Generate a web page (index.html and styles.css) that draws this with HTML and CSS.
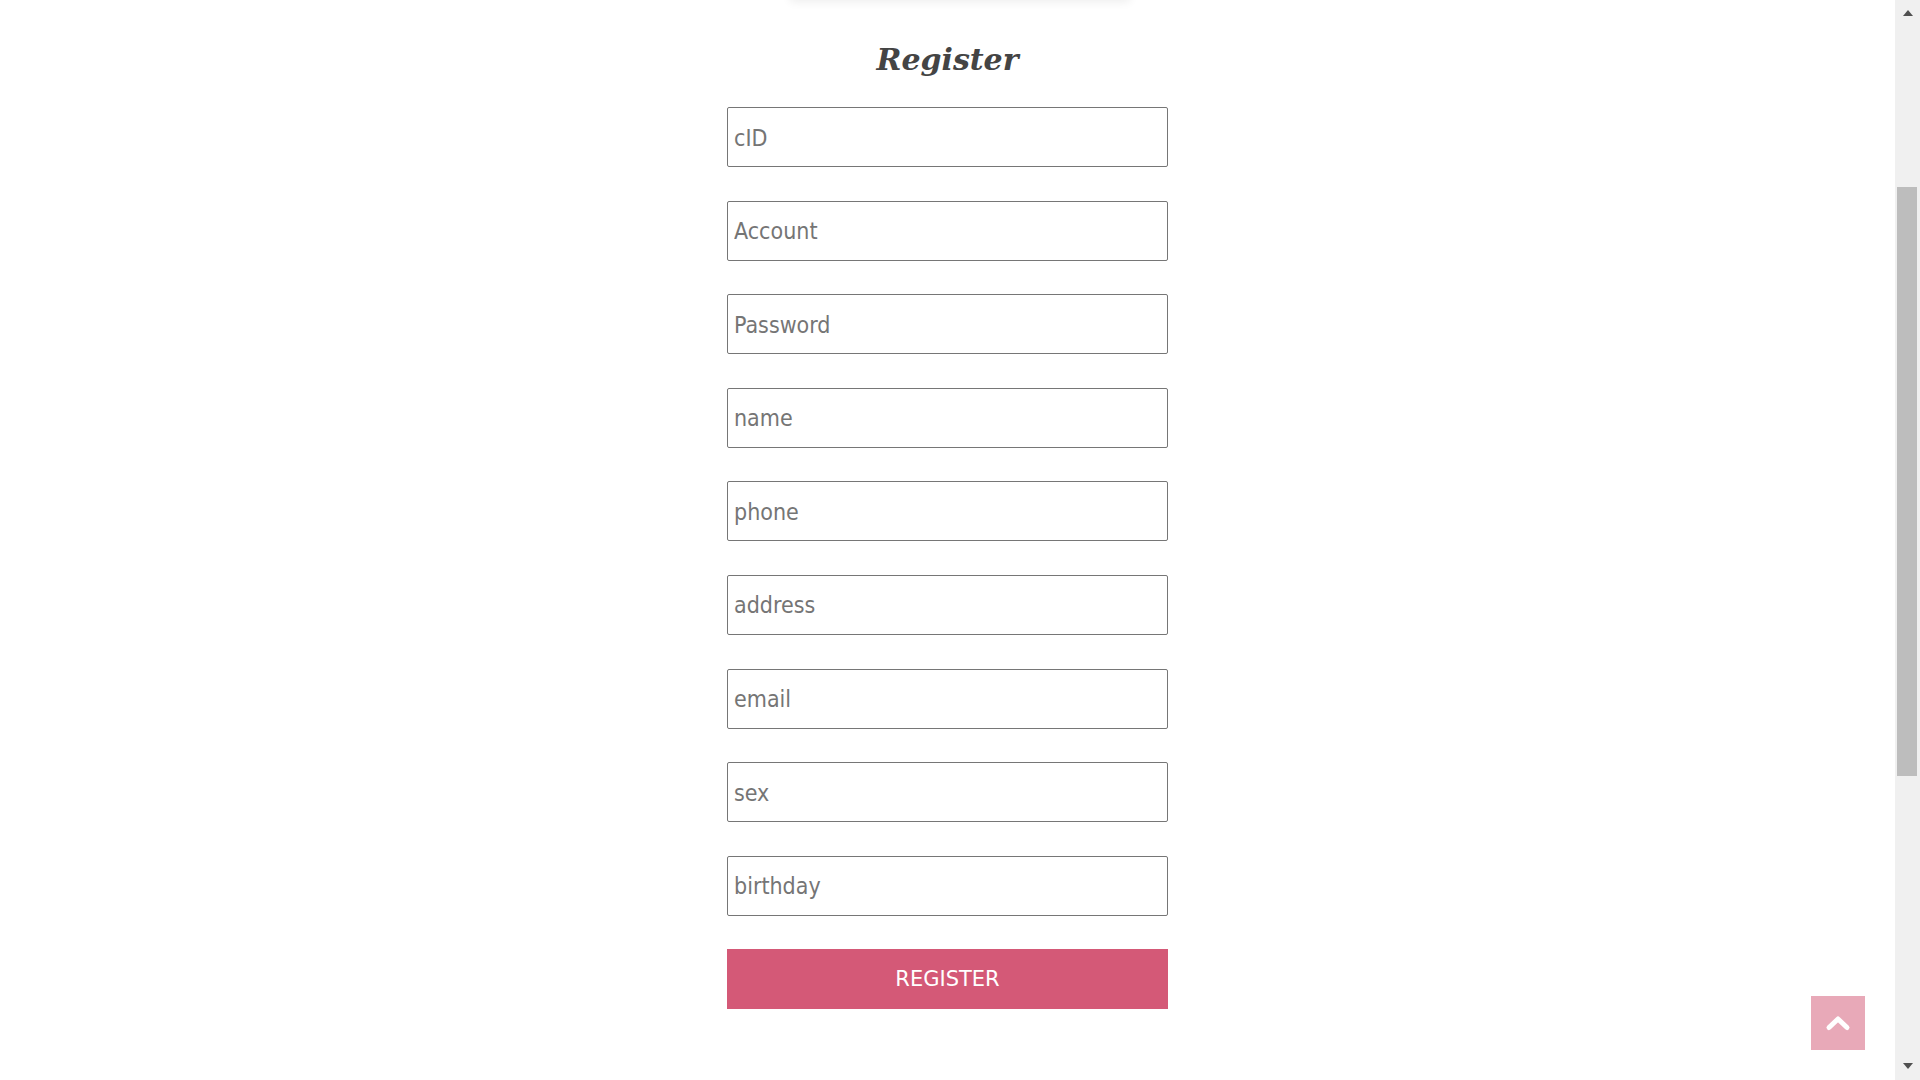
FILE: index.html
```html
<!DOCTYPE html>
<html lang="en">
<head>
<meta charset="utf-8">
<title>Register</title>
<link rel="stylesheet" href="styles.css">
</head>
<body>
<div class="viewport">
  <main class="page">
    <div class="top-card"></div>
    <h1 class="title">Register</h1>
    <form class="register-form">
      <input class="field" type="text" placeholder="cID">
      <input class="field" type="text" placeholder="Account">
      <input class="field" type="password" placeholder="Password">
      <input class="field" type="text" placeholder="name">
      <input class="field" type="text" placeholder="phone">
      <input class="field" type="text" placeholder="address">
      <input class="field" type="text" placeholder="email">
      <input class="field" type="text" placeholder="sex">
      <input class="field" type="text" placeholder="birthday">
      <button class="submit" type="button">REGISTER</button>
    </form>
  </main>
  <aside class="scrollbar">
    <div class="sb-btn"><span class="tri-up"></span></div>
    <div class="sb-track"><div class="sb-thumb"></div></div>
    <div class="sb-btn sb-btn-down"><span class="tri-down"></span></div>
  </aside>
</div>
<a class="to-top" href="#">
  <svg width="26" height="18" viewBox="0 0 26 18"><polyline points="4,13.5 13,5 22,13.5" fill="none" stroke="#fff" stroke-width="5" stroke-linecap="round" stroke-linejoin="round"/></svg>
</a>
</body>
</html>
```
FILE: styles.css
```css
html, body {
  margin: 0;
  padding: 0;
  height: 100%;
  background: #fff;
}
body {
  overflow: hidden;
}
.viewport {
  display: flex;
  height: 100vh;
}
.page {
  flex: 1;
  display: flex;
  flex-direction: column;
  align-items: center;
  padding-top: 42px;
  overflow: hidden;
}
.top-card {
  width: 340px;
  height: 20px;
  margin: -62px 0 42px 25px;
  background: #fff;
  box-shadow: 0 2px 10px rgba(0, 0, 0, 0.07);
}
.title {
  margin: 0 0 29px;
  font-family: "DejaVu Serif", "Liberation Serif", serif;
  font-style: italic;
  font-weight: bold;
  font-size: 30px;
  line-height: 36px;
  color: #444;
}
.register-form {
  display: flex;
  flex-direction: column;
  width: 441px;
}
.field {
  box-sizing: border-box;
  width: 441px;
  height: 60px;
  margin: 0 0 33.6px;
  padding: 1px 6px 0;
  border: 1px solid #767676;
  border-radius: 2px;
  font-family: "DejaVu Sans Condensed", "DejaVu Sans", sans-serif;
  font-stretch: condensed;
  font-size: 23px;
  color: #333;
  background: #fff;
  outline: none;
}
.field::placeholder {
  color: #757575;
}
.submit {
  box-sizing: border-box;
  width: 441px;
  height: 60px;
  border: 0;
  padding: 0;
  background: #d45977;
  color: #fff;
  font-family: "DejaVu Sans", sans-serif;
  font-size: 21px;
  cursor: pointer;
}
.scrollbar {
  width: 25px;
  flex: none;
  display: flex;
  flex-direction: column;
  background: #f0f0f0;
}
.sb-btn {
  height: 25px;
  display: flex;
  justify-content: center;
  align-items: center;
}
.tri-up {
  width: 0;
  height: 0;
  border-left: 5.5px solid transparent;
  border-right: 5.5px solid transparent;
  border-bottom: 6px solid #505050;
  margin-top: 1px;
}
.tri-down {
  width: 0;
  height: 0;
  border-left: 5.5px solid transparent;
  border-right: 5.5px solid transparent;
  border-top: 6px solid #505050;
  margin-top: -4px;
}
.sb-track {
  flex: 1;
}
.sb-thumb {
  margin: 162px 3px 0 2px;
  height: 589px;
  background: #bdbdbd;
}
.to-top {
  position: fixed;
  right: 55px;
  bottom: 30px;
  width: 54px;
  height: 54px;
  background: #e8a9b8;
  display: flex;
  align-items: center;
  justify-content: center;
}
.to-top svg {
  display: block;
  margin-top: -1px;
}
```
